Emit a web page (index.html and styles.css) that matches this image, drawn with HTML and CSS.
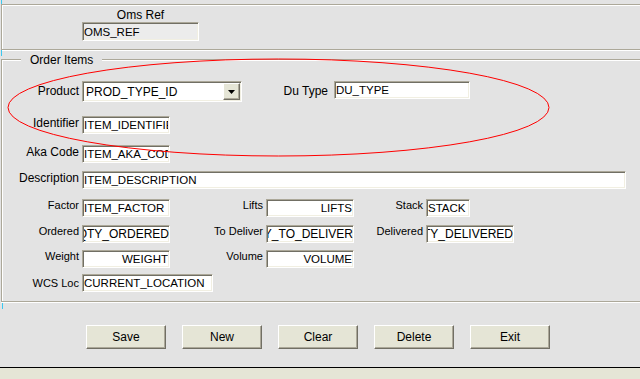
FILE: index.html
```html
<!DOCTYPE html>
<html lang="en">
<head>
    <meta charset="UTF-8">
    <meta name="viewport" content="width=device-width, initial-scale=1.0">
    <title>Order Items</title>
    <link rel="stylesheet" href="styles.css">
</head>
<body>
    <div class="ref-panel">
        <div class="ref-field">
            <label class="ref-label">Oms Ref</label>
            <input class="field field-ro w-ref" value="OMS_REF" readonly>
        </div>
    </div>

    <div class="items">
        <span class="legend">Order Items</span>

        <div class="rows">
            <!-- Product / Du Type -->
            <div class="row">
                <label class="lbl lbl-w1">Product</label>
                <div class="select">
                    <span class="select-value">PROD_TYPE_ID</span>
                    <span class="select-btn">
                        <svg width="7" height="4" viewBox="0 0 7 4"><polygon points="0,0 7,0 3.5,4" fill="#000"/></svg>
                    </span>
                </div>
                <label class="lbl lbl-du">Du Type</label>
                <input class="field w-du" value="DU_TYPE">
            </div>

            <div class="row">
                <label class="lbl lbl-w1">Identifier</label>
                <input class="field w-s" value="ITEM_IDENTIFIER">
            </div>

            <div class="row">
                <label class="lbl lbl-w1">Aka Code</label>
                <input class="field w-s" value="ITEM_AKA_CODE">
            </div>

            <div class="row">
                <label class="lbl lbl-w1">Description</label>
                <input class="field w-desc" value="ITEM_DESCRIPTION">
            </div>

            <!-- numeric rows use the small font -->
            <div class="row row-small">
                <label class="lbl lbl-w1">Factor</label>
                <input class="field w-s" value="ITEM_FACTOR">
                <label class="lbl lbl-w2">Lifts</label>
                <input class="field w-s right" value="LIFTS">
                <label class="lbl lbl-w3">Stack</label>
                <input class="field w-xs" value="STACK">
            </div>

            <div class="row row-small">
                <label class="lbl lbl-w1">Ordered</label>
                <input class="field w-s tail" value="QTY_ORDERED">
                <label class="lbl lbl-w2">To Deliver</label>
                <input class="field w-s tail" value="QTY_TO_DELIVER">
                <label class="lbl lbl-w3">Delivered</label>
                <input class="field w-s tail" value="QTY_DELIVERED">
            </div>

            <div class="row row-small">
                <label class="lbl lbl-w1">Weight</label>
                <input class="field w-s right" value="WEIGHT">
                <label class="lbl lbl-w2">Volume</label>
                <input class="field w-s right" value="VOLUME">
            </div>

            <div class="row row-small row-center">
                <label class="lbl lbl-w1">WCS Loc</label>
                <input class="field w-loc" value="CURRENT_LOCATION">
            </div>
        </div>
    </div>

    <div class="actions">
        <button class="btn">Save</button>
        <button class="btn">New</button>
        <button class="btn">Clear</button>
        <button class="btn">Delete</button>
        <button class="btn">Exit</button>
    </div>

    <div class="status"></div>

    <!-- red annotation drawn over the form -->
    <svg class="annotation" width="640" height="379" viewBox="0 0 640 379">
        <ellipse cx="278.5" cy="107.5" rx="270.5" ry="48.5" fill="none" stroke="#ff0000" stroke-width="1"/>
    </svg>
</body>
</html>
```

FILE: styles.css
```css
:root {
    --bg: #e3e3e3;
    --beige: #e5e5d6;
    --edge: #aca899;
    --edge-dark: #716f64;
    --edge-light: #f1efe2;
    --mark: #3cc8f0;
}

* {
    margin: 0;
    padding: 0;
    box-sizing: border-box;
}

body {
    position: relative;
    width: 640px;
    height: 379px;
    overflow: hidden;
    background-color: var(--bg);
    font-family: 'Liberation Sans', Arial, sans-serif;
    font-size: 12px;
    color: #000;
}

/* top panel */
.ref-panel {
    position: relative;
    margin: 4px 0 0 1px;
    padding: 3px 0 8px 80px;
    border-top: 1px solid var(--edge);
    border-left: 1px solid var(--edge);
    border-bottom: 1px solid var(--edge);
    box-shadow: inset 1px 1px 0 #fff, 0 1px 0 #fff;
}

.ref-panel::before {
    content: '';
    position: absolute;
    left: -1px;
    top: -5px;
    width: 1px;
    height: 4px;
    background-color: var(--mark);
}

.ref-panel::after {
    content: '';
    position: absolute;
    left: -1px;
    bottom: -7px;
    width: 1px;
    height: 6px;
    background-color: var(--mark);
}

.ref-field {
    display: flex;
    flex-direction: column;
    align-items: center;
    width: 117px;
}

.ref-label {
    line-height: 14px;
}

/* fields */
.field {
    display: block;
    height: 18px;
    padding: 0 1px 0 1px;
    border: 1px solid;
    border-color: var(--edge) #fff #fff var(--edge);
    box-shadow: inset 1px 1px 0 var(--edge-dark), inset -1px -1px 0 var(--edge-light);
    background-color: #fff;
    font-family: 'Liberation Sans', Arial, sans-serif;
    font-size: 11.5px;
    color: #000;
    outline: none;
    flex: none;
}

.field-ro {
    height: 19px;
    background-color: #ececec;
}

.field.right {
    text-align: right;
}

/* show the end of long values, as a scrolled field does */
.field.tail {
    direction: rtl;
    padding-right: 0;
    font-size: 12px;
}

.w-ref { width: 117px; }
.w-s { width: 88px; }
.w-xs { width: 44px; }
.w-du { width: 136px; }
.w-desc { width: 544px; }
.w-loc { width: 131px; }

/* order items group */
.items {
    position: relative;
    margin: 9px 0 0 1px;
    padding: 21px 0 9px 0;
    border-top: 1px solid var(--edge);
    border-left: 1px solid var(--edge);
    border-bottom: 1px solid var(--edge);
    box-shadow: inset 1px 1px 0 #fff, 0 1px 0 #fff;
}

.items::after {
    content: '';
    position: absolute;
    left: 0;
    bottom: -8px;
    width: 1px;
    height: 6px;
    background-color: var(--mark);
}

.legend {
    position: absolute;
    top: -7px;
    left: 19px;
    padding: 0 9px;
    background-color: var(--bg);
    line-height: 14px;
}

.rows {
    display: grid;
    grid-template-rows: 35px 29px 26px 28px 26px 25px 24px 18px;
}

.row {
    display: flex;
    align-items: flex-start;
}

.lbl {
    flex: none;
    text-align: right;
    line-height: 14px;
    margin-right: 3px;
    white-space: nowrap;
}

.row-small .lbl {
    font-size: 11px;
    line-height: 13px;
    margin-top: 0;
}

.row-center {
    align-items: center;
}

.lbl-w1 { width: 77px; }
.lbl-w2 { width: 93px; }
.lbl-w3 { width: 69px; }

.lbl-du {
    width: 85px;
    margin-right: 6px;
    margin-top: 3px;
}

.row:first-child .lbl-w1 {
    margin-top: 3px;
}

/* combo box */
.select {
    display: flex;
    align-items: center;
    justify-content: space-between;
    width: 160px;
    height: 21px;
    margin-right: 1px;
    padding: 0 1px 0 3px;
    border: 1px solid;
    border-color: var(--edge) #fff #fff var(--edge);
    box-shadow: inset 1px 1px 0 var(--edge-dark), inset -1px -1px 0 var(--edge-light);
    background-color: #fff;
    font-size: 12px;
}

.select-btn {
    display: flex;
    align-items: center;
    justify-content: center;
    width: 17px;
    height: 17px;
    background-color: var(--beige);
    border: 1px solid;
    border-color: #fff var(--edge-dark) var(--edge-dark) #fff;
    box-shadow: inset -1px -1px 0 var(--edge);
}

/* buttons */
.actions {
    display: flex;
    gap: 16px;
    margin-top: 23px;
    padding-left: 86px;
}

.btn {
    width: 80px;
    height: 24px;
    background-color: var(--beige);
    border: 1px solid;
    border-color: #fff var(--edge-dark) var(--edge-dark) #fff;
    box-shadow: inset -1px -1px 0 var(--edge);
    font-family: 'Liberation Sans', Arial, sans-serif;
    font-size: 12px;
    color: #000;
    cursor: pointer;
}

.status {
    margin-top: 18px;
    height: 12px;
    border-top: 1px solid #000;
    background-color: var(--beige);
}

.annotation {
    position: absolute;
    top: 0;
    left: 0;
    pointer-events: none;
}
```
